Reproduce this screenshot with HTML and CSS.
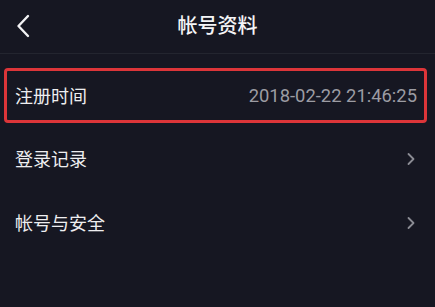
FILE: index.html
```html
<!DOCTYPE html>
<html lang="zh">
<head>
<meta charset="utf-8">
<link rel="stylesheet" href="styles.css">
</head>
<body>
<div class="page">
  <header class="nav">
    <span class="back">
      <svg width="14" height="24" viewBox="0 0 14 24"><path d="M12 2 L2.5 12 L12 22" fill="none" stroke="#f2f2f4" stroke-width="2.4" stroke-linecap="round" stroke-linejoin="round"/></svg>
    </span>
    <h1 class="title">帐号资料</h1>
  </header>
  <ul class="list">
    <li class="row row-hl">
      <span class="label">注册时间</span>
      <span class="value">2018-02-22 21:46:25</span>
    </li>
    <li class="row">
      <span class="label">登录记录</span>
      <svg class="chev" width="10" height="14" viewBox="0 0 10 14"><path d="M2.5 2 L7.5 7 L2.5 12" fill="none" stroke="#8b8c94" stroke-width="1.8" stroke-linecap="round" stroke-linejoin="round"/></svg>
    </li>
    <li class="row">
      <span class="label">帐号与安全</span>
      <svg class="chev" width="10" height="14" viewBox="0 0 10 14"><path d="M2.5 2 L7.5 7 L2.5 12" fill="none" stroke="#8b8c94" stroke-width="1.8" stroke-linecap="round" stroke-linejoin="round"/></svg>
    </li>
  </ul>
</div>
</body>
</html>
```

FILE: styles.css
```css
* { box-sizing: border-box; }
html, body {
  margin: 0;
  padding: 0;
  background: #161722;
}
body {
  width: 435px;
  height: 307px;
  overflow: hidden;
  font-family: "Noto Sans CJK SC", "Roboto", sans-serif;
  color: #f0f0f2;
}
.page {
  display: flex;
  flex-direction: column;
}
.nav {
  height: 54px;
  border-bottom: 1px solid #23252f;
  display: flex;
  align-items: center;
  justify-content: center;
  position: relative;
}
.back {
  position: absolute;
  left: 16px;
  top: 14px;
  display: flex;
}
.title {
  margin: 0;
  font-size: 20px;
  font-weight: 500;
  line-height: 24px;
  color: #f4f4f6;
  padding-bottom: 3px;
}
.list {
  list-style: none;
  margin: 0;
  padding: 0;
}
.row {
  height: 64px;
  display: flex;
  align-items: center;
  justify-content: space-between;
  padding: 0 19px 0 15px;
}
.row-hl {
  height: 55px;
  margin: 14px 8px 4px 4px;
  border: 3px solid #dc3539;
  border-radius: 4px;
  padding: 0 7px 0 8px;
}
.label {
  font-size: 18px;
  line-height: 22px;
  color: #eeeef0;
  padding-bottom: 2px;
}
.value {
  font-family: "Roboto", "Noto Sans CJK SC", sans-serif;
  font-size: 18.4px;
  color: #9c9ca3;
  padding-bottom: 1px;
}
.chev {
  display: block;
}
```
